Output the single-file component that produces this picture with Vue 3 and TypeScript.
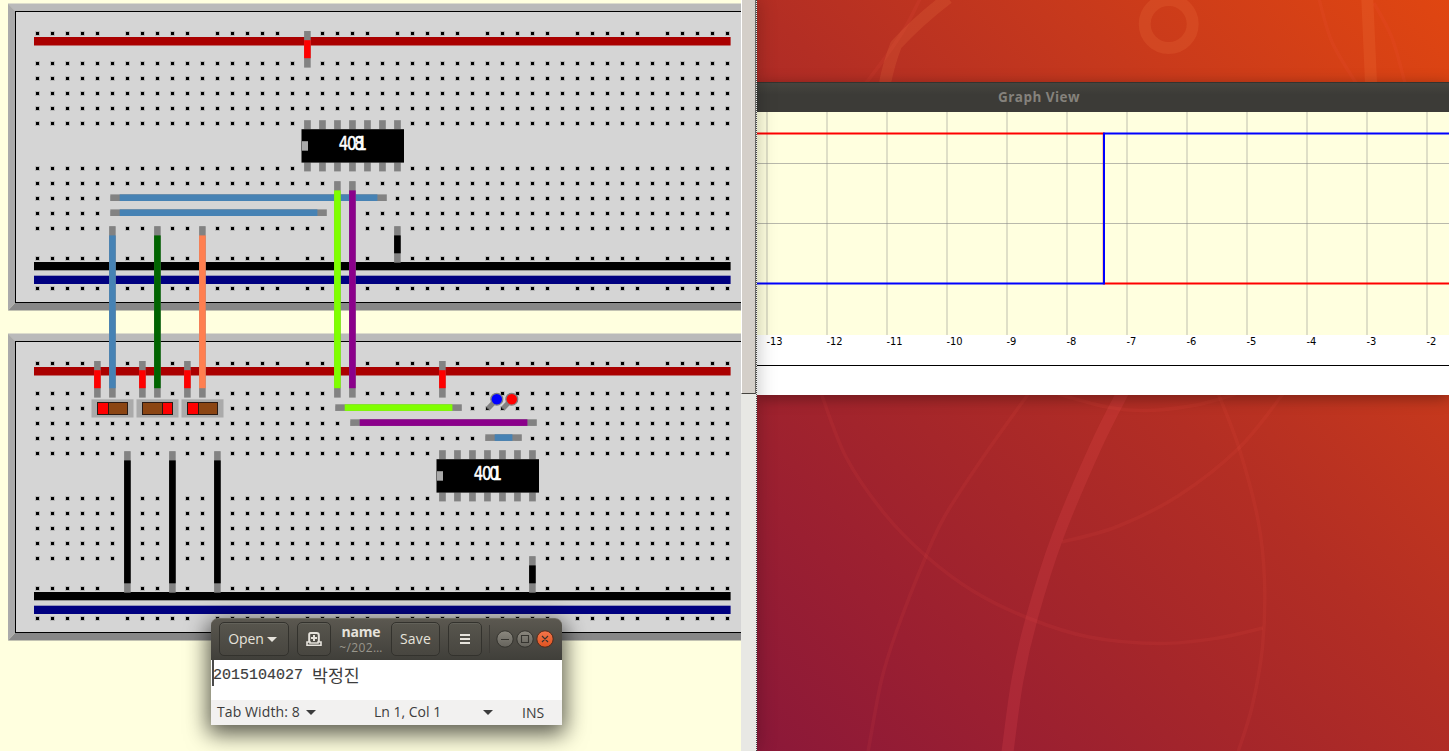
<script setup lang="ts">
type Point = [number, number]
interface Wire { x: number; y: number; len: number; color: string; flat?: boolean }
interface Chip { x: number; y: number; digits: string }
interface Switch { x: number; y: number; right?: boolean }

const columns = Array.from({ length: 47 }, (_, i) => i)
const mainRows = [63, 78, 93, 108, 123, 168, 183, 198, 213, 228]
const railRows = [33, 258, 288]

const holes: Point[] = [
  ...mainRows.flatMap((y) => columns.map((c): Point => [36 + c * 15, y - 1])),
  ...railRows.flatMap((y) =>
    columns.filter((c) => c % 6 !== 5).map((c): Point => [36 + c * 15, y - 1]),
  ),
]
const boards = [0, 330]

const wires: Wire[] = [
  { x: 110.3, y: 197.7, len: 276.5, color: '#4682b4', flat: true },
  { x: 110.3, y: 212.7, len: 216.5, color: '#4682b4', flat: true },
  { x: 335.3, y: 407.6, len: 126.5, color: '#7fff00', flat: true },
  { x: 350.3, y: 422.6, len: 186.5, color: '#8b008b', flat: true },
  { x: 485.3, y: 437.6, len: 36.5, color: '#4682b4', flat: true },
  { x: 307.4, y: 31, len: 36.6, color: '#ff0000' },
  { x: 97.4, y: 361, len: 36.6, color: '#ff0000' },
  { x: 142.4, y: 361, len: 36.6, color: '#ff0000' },
  { x: 187.4, y: 361, len: 36.6, color: '#ff0000' },
  { x: 442.4, y: 361, len: 36.6, color: '#ff0000' },
  { x: 112.4, y: 226.2, len: 171.4, color: '#4682b4' },
  { x: 157.4, y: 226.2, len: 171.4, color: '#006400' },
  { x: 202.4, y: 226.2, len: 171.4, color: '#ff7f50' },
  { x: 337.4, y: 181.2, len: 216.4, color: '#7fff00' },
  { x: 352.4, y: 181.2, len: 216.4, color: '#8b008b' },
  { x: 397.4, y: 226.2, len: 36.5, color: '#000000' },
  { x: 127.4, y: 451.2, len: 141.5, color: '#000000' },
  { x: 172.4, y: 451.2, len: 141.5, color: '#000000' },
  { x: 217.4, y: 451.2, len: 141.5, color: '#000000' },
  { x: 532.4, y: 556.2, len: 36.5, color: '#000000' },
]

const chips: Chip[] = [
  { x: 301.5, y: 129.2, digits: '4081' },
  { x: 436.5, y: 459.2, digits: '4001' },
]
const digitOffsets = [37.2, 45.4, 52.8, 56]

const switches: Switch[] = [
  { x: 91.5, y: 399.3 },
  { x: 136.5, y: 399.3, right: true },
  { x: 181.5, y: 399.3 },
]

const probes = [
  { x: 496.8, y: 399.2, color: '#0000ff' },
  { x: 511.8, y: 399.2, color: '#ff0000' },
]

const ticks = Array.from({ length: 12 }, (_, i) => ({ x: 10 + i * 60, label: String(i - 13) }))

// Smooth open curve through a list of points (Catmull-Rom to cubic Bezier).
function curve(p: Point[]): string {
  let d = `M${p[0][0]} ${p[0][1]}`
  for (let i = 0; i < p.length - 1; i++) {
    const a = p[i - 1] ?? p[i]
    const b = p[i]
    const c = p[i + 1]
    const e = p[i + 2] ?? c
    d += `C${b[0] + (c[0] - a[0]) / 6} ${b[1] + (c[1] - a[1]) / 6} ${c[0] - (e[0] - b[0]) / 6} ${c[1] - (e[1] - b[1]) / 6} ${c[0]} ${c[1]}`
  }
  return d
}

const thinLines = [
  curve([[821, 393], [846, 457], [884, 513], [926, 556], [973, 591], [1028, 618], [1089, 637], [1160, 643.5], [1218, 638], [1263, 628]]),
  curve([[1029, 393], [986, 453], [946, 514], [926, 556], [897, 630], [881.5, 680], [868, 752]]),
  curve([[1218, 393], [1239, 448], [1258, 520], [1264.5, 580], [1262.5, 647], [1252, 707], [1238, 752]]),
  curve([[1283, 394], [1239, 448], [1178, 496], [1116, 527], [1062, 542]]),
  curve([[1058, 394], [1107, 407], [1147, 410.5], [1196, 405], [1236, 394]]),
  curve([[866, 83], [887, 55], [905, 28], [920, -1]]),
  curve([[1319, -1], [1332, 42], [1356, 83]]),
  curve([[1374, 3], [1392, 38], [1405, 83]]),
]
const thickLines = [
  curve([[1124, 390], [1095.5, 447], [1057.5, 537], [1032, 617], [1017.5, 680], [1007.5, 752]]),
]
const warmLines = ['M885 83Q889 63 896 45Q918 21 948 -2', 'M1367.3 -1L1371 83']
</script>

<template>
  <div class="desktop">
    <svg class="wallpaper" viewBox="757 0 692 751" width="692" height="751">
      <path v-for="d in thinLines" :key="d" :d="d" class="thin" />
      <path v-for="d in thickLines" :key="d" :d="d" class="thick" />
      <path v-for="d in warmLines" :key="d" :d="d" class="thick warm" />
      <circle cx="1168.7" cy="24" r="24" class="thick warm" />
    </svg>

    <section class="window graph">
      <header class="graph-title"><span>Graph View</span></header>
      <svg class="plot" width="692" height="283" viewBox="0 0 692 283">
        <rect width="692" height="223" fill="#ffffdf" />
        <rect v-for="t in ticks" :key="t.x" :x="t.x - 1" y="0" width="2" height="223" class="grid-v" />
        <rect x="0" y="51" width="692" height="1" class="grid-h" />
        <rect x="0" y="111" width="692" height="1" class="grid-h" />
        <path d="M0 21.5H346.8V171.5H692" stroke="#ff0000" class="signal" />
        <path d="M0 171.5H347V21.5H692" stroke="#0000ff" class="signal" />
        <text v-for="t in ticks" :key="t.label" :x="t.x - 0.5" y="233" class="tick">{{ t.label }}</text>
        <rect x="0" y="253" width="692" height="1" fill="#000" />
      </svg>
    </section>

    <section class="window breadboard">
      <svg class="board-view" width="741" height="751" viewBox="0 0 741 751">
        <rect width="741" height="751" fill="#ffffdf" />
        <g v-for="offset in boards" :key="offset" :transform="`translate(0 ${offset})`">
          <path d="M8 3.400H760V12H15.500L8 3.400Z" fill="#bababa" />
          <path d="M8 3.400L15.500 11.500V302.500L8 310.500Z" fill="#aaaaaa" />
          <path d="M8 310.500L15.500 302.500H760V310.500Z" fill="#888888" />
          <rect x="15.500" y="11.500" width="760" height="291" fill="#d5d5d5" stroke="#000" />
          <g v-for="(h, i) in holes" :key="i">
            <rect :x="h[0] - 1" :y="h[1] - 1" width="5" height="5" fill="#000" fill-opacity="0.140" />
            <rect :x="h[0]" :y="h[1]" width="3" height="3" fill="#000" />
          </g>
          <rect x="34" y="37" width="696.600" height="8.500" fill="#aa0000" />
          <rect x="34" y="262" width="696.600" height="8.300" fill="#000" />
          <rect x="34" y="275.700" width="696.600" height="8.300" fill="#000080" />
        </g>

        <g v-for="c in chips" :key="c.digits" :transform="`translate(${c.x} ${c.y})`">
          <g v-for="n in 7" :key="n">
            <rect :x="n * 15 - 12.4" y="-9" width="6.700" height="9" fill="#828282" />
            <rect :x="n * 15 - 12.4" y="33.200" width="6.700" height="9" fill="#828282" />
          </g>
          <rect width="102.500" height="33.400" fill="#000" />
          <rect x="0.500" y="12" width="6" height="9.500" fill="#aaaaaa" />
          <g transform="translate(0 20.600)">
            <text
              v-for="(digit, i) in c.digits"
              :key="i"
              :transform="`translate(${digitOffsets[i]} 0) scale(0.750 1)`"
              class="chip-digit"
            >{{ digit }}</text>
          </g>
        </g>

        <g v-for="s in switches" :key="s.x" :transform="`translate(${s.x} ${s.y})`">
          <rect width="42" height="18.200" fill="#aaaaaa" />
          <rect x="6" y="3.200" width="30" height="12" fill="#8b4513" stroke="#2a1a14" />
          <rect :x="s.right ? 26 : 6" y="3.200" :width="s.right ? 10 : 11" height="12" fill="#ff0000" stroke="#2a1a14" />
        </g>

        <g v-for="(w, i) in wires" :key="i">
          <template v-if="w.flat">
            <rect :x="w.x" :y="w.y - 3.300" :width="w.len" height="6.600" fill="#828282" />
            <rect :x="w.x + 9.400" :y="w.y - 3.300" :width="w.len - 18.800" height="6.600" :fill="w.color" />
          </template>
          <template v-else>
            <rect :x="w.x - 3.300" :y="w.y" width="6.600" :height="w.len" fill="#828282" />
            <rect :x="w.x - 3.300" :y="w.y + 9.200" width="6.600" :height="w.len - 18.600" :fill="w.color" />
          </template>
        </g>

        <g v-for="p in probes" :key="p.x">
          <path :d="`M${p.x} ${p.y}l-9 9.500`" stroke="#828282" stroke-width="5" />
          <path :d="`M${p.x - 9.8} ${p.y + 8.6}l1.4 1.4`" stroke="#555" stroke-width="1.200" />
          <circle :cx="p.x" :cy="p.y" r="5.900" :fill="p.color" stroke="#808080" stroke-width="1.300" />
        </g>
      </svg>
      <div class="scrollbar"><div class="thumb"></div></div>
    </section>

    <section class="window editor">
      <header class="toolbar">
        <button class="tool open"><span class="open-label">Open</span><i class="arrow"></i></button>
        <button class="tool new">
          <svg width="18" height="18" viewBox="0 0 18 18" fill="none" stroke="#e6e3dc">
            <path d="M4.200 12V4.500Q4.200 3 5.700 3H11.500Q13.800 3 13.800 5.300V12" stroke-width="2" />
            <path d="M9 5V11M6 8H12" stroke-width="2" />
            <path d="M2 12H5V13H13V12H16V15.200H2Z" stroke-width="1.600" />
          </svg>
        </button>
        <div class="doc"><b>name</b><small>~/202…</small></div>
        <button class="tool save"><span>Save</span></button>
        <button class="tool menu"><i></i><i></i><i></i></button>
        <div class="rule"></div>
        <svg class="controls" width="60" height="20" viewBox="0 0 60 20">
          <defs>
            <linearGradient id="grey" x2="0" y2="1"><stop stop-color="#8b887f" /><stop offset="1" stop-color="#65635c" /></linearGradient>
            <linearGradient id="orange" x2="0" y2="1"><stop stop-color="#f4764b" /><stop offset="1" stop-color="#e05320" /></linearGradient>
          </defs>
          <circle cx="10" cy="10" r="8.200" fill="url(#grey)" stroke="#33322d" />
          <circle cx="30" cy="10" r="8.200" fill="url(#grey)" stroke="#33322d" />
          <circle cx="50" cy="10" r="8.200" fill="url(#orange)" stroke="#4d2a1c" />
          <path d="M6 10.500H14M26.500 6.500H33.500V13.500H26.500ZM47 7L53 13M53 7L47 13" fill="none" stroke="#35342f" stroke-width="1.100" />
        </svg>
      </header>
      <div class="text"><span class="caret"></span><span class="digits">2015104027</span><span class="hangul">박정진</span></div>
      <footer class="status">
        <span class="tab">Tab Width: 8</span><i class="arrow dark"></i>
        <span class="pos">Ln 1, Col 1</span><i class="arrow dark second"></i>
        <span class="ins">INS</span>
      </footer>
    </section>
  </div>
</template>

<style>
html,
body {
  overflow: hidden;
}
</style>

<style scoped>
.desktop {
  position: relative;
  width: 1449px;
  height: 751px;
  overflow: hidden;
  font-family: 'Open Sans', 'Noto Sans', 'Noto Sans CJK KR', sans-serif;
}
.wallpaper {
  position: absolute;
  left: 757px;
  top: 0;
  background: linear-gradient(45deg, #8b1839 0%, #9a1f31 18%, #a5262a 34%, #b32e24 52%, #c5381d 71%, #e04611 100%);
}
.thin {
  fill: none;
  stroke: #ff5a4a;
  stroke-opacity: 0.09;
  stroke-width: 3.5;
}
.thick {
  fill: none;
  stroke: #ff5a60;
  stroke-opacity: 0.16;
  stroke-width: 12;
}
.warm {
  stroke: #ff8a50;
  stroke-opacity: 0.15;
}
.window {
  position: absolute;
}
.graph {
  left: 757px;
  top: 82px;
  width: 692px;
  height: 313px;
  background: #fff;
  box-shadow: 0 3px 14px rgba(0, 0, 0, 0.36);
}
.graph-title {
  height: 30px;
  box-sizing: border-box;
  border-top: 1px solid #34332f;
  background: linear-gradient(#45443e, #3c3b37 40%);
  padding-left: 241px;
  font-size: 13.5px;
  font-weight: 700;
  line-height: 29px;
  letter-spacing: 0.45px;
  color: #85827c;
}
.plot {
  display: block;
}
.grid-v {
  fill: #808080;
  fill-opacity: 0.25;
}
.grid-h {
  fill: #808080;
  fill-opacity: 0.55;
}
.signal {
  fill: none;
  stroke-width: 2;
}
.tick {
  font-family: 'DejaVu Sans Condensed', 'DejaVu Sans', sans-serif;
  font-stretch: condensed;
  font-size: 11px;
}
.breadboard {
  left: 0;
  top: 0;
  width: 757px;
  height: 751px;
  display: flex;
  box-shadow: 0 0 18px rgba(0, 0, 0, 0.25);
}
.chip-digit {
  font-family: 'DejaVu Sans', sans-serif;
  font-size: 20px;
  fill: #fff;
  stroke: #fff;
  stroke-width: 0.5;
}
.scrollbar {
  width: 16px;
  height: 751px;
  box-sizing: border-box;
  background: repeating-linear-gradient(#444 0 1px, #eee 1px 2px) right / 1px 100% no-repeat #e8e8e4;
}
.thumb {
  width: 15px;
  height: 394px;
  box-sizing: border-box;
  background: #d4cfc9;
  border-left: 1px solid #fff;
  border-right: 1px solid #6b6966;
  border-bottom: 1px solid #45433f;
}
.editor {
  left: 211px;
  top: 618px;
  width: 351px;
  height: 107px;
  border-radius: 7px 7px 0 0;
  box-shadow: 0 6px 22px 3px rgba(0, 0, 0, 0.66);
  color: #3c3c3c;
}
.toolbar {
  height: 42px;
  box-sizing: border-box;
  display: flex;
  padding: 3px 0 0 8px;
  border-radius: 7px 7px 0 0;
  background: linear-gradient(#5b5850, #403f3a);
  border-top: 1px solid #706d63;
  color: #e6e3dc;
}
.tool {
  height: 34px;
  box-sizing: border-box;
  display: flex;
  align-items: center;
  justify-content: center;
  padding: 0;
  border: 1px solid #33322d;
  border-radius: 5px;
  background: linear-gradient(#57554d, #484640);
  box-shadow: inset 0 1px rgba(255, 255, 255, 0.07);
  color: inherit;
  font: 14px 'Open Sans', sans-serif;
}
.tool span {
  margin-top: -2px;
}
.open {
  width: 70px;
  gap: 3px;
  padding-right: 3px;
}
.open-label {
  letter-spacing: -0.1px;
}
.new {
  width: 34px;
  margin-left: 8px;
}
.doc {
  width: 60px;
  display: flex;
  flex-direction: column;
  align-items: center;
  padding-top: 1px;
  box-sizing: border-box;
}
.doc b {
  font-size: 14px;
  line-height: 18px;
  height: 17px;
  letter-spacing: -0.2px;
}
.doc small {
  font-size: 12px;
  line-height: 15px;
  color: #99968c;
  letter-spacing: 0.4px;
}
.save {
  width: 49px;
}
.save span {
  letter-spacing: 0.15px;
}
.menu {
  width: 34px;
  margin-left: 8px;
  flex-direction: column;
  gap: 2px;
}
.menu i {
  width: 10px;
  height: 2px;
  background: #e6e3dc;
}
.rule {
  width: 1px;
  height: 28px;
  margin: 3px 0 0 7px;
  background: #3e3c37;
}
.controls {
  margin: 7px 0 0 5px;
}
.arrow {
  border: 5px solid transparent;
  border-top-color: #e6e3dc;
  border-bottom: 0;
}
.text {
  height: 40px;
  display: flex;
  background: #fff;
  line-height: 32px;
}
.caret {
  width: 2px;
  height: 26px;
  margin-left: 1px;
  background: #4a4a4a;
}
.digits {
  width: 99px;
  margin-left: -1px;
  font-family: 'Liberation Mono', monospace;
  font-size: 15px;
  -webkit-text-stroke: 0.2px #3c3c3c;
}
.hangul {
  font-family: 'Noto Sans CJK KR', sans-serif;
  font-size: 17.3px;
  line-height: 29px;
}
.status {
  height: 25px;
  display: flex;
  align-items: center;
  background: #f2f1f0;
  padding-left: 6px;
  font-size: 14px;
  line-height: 24px;
}
.tab {
  width: 89px;
  padding-bottom: 2px;
  letter-spacing: 0.1px;
}
.dark {
  border-top-color: #3c3c3c;
}
.pos {
  width: 109px;
  margin-left: 58px;
  padding-bottom: 2px;
}
.ins {
  margin-left: 29px;
}
</style>
